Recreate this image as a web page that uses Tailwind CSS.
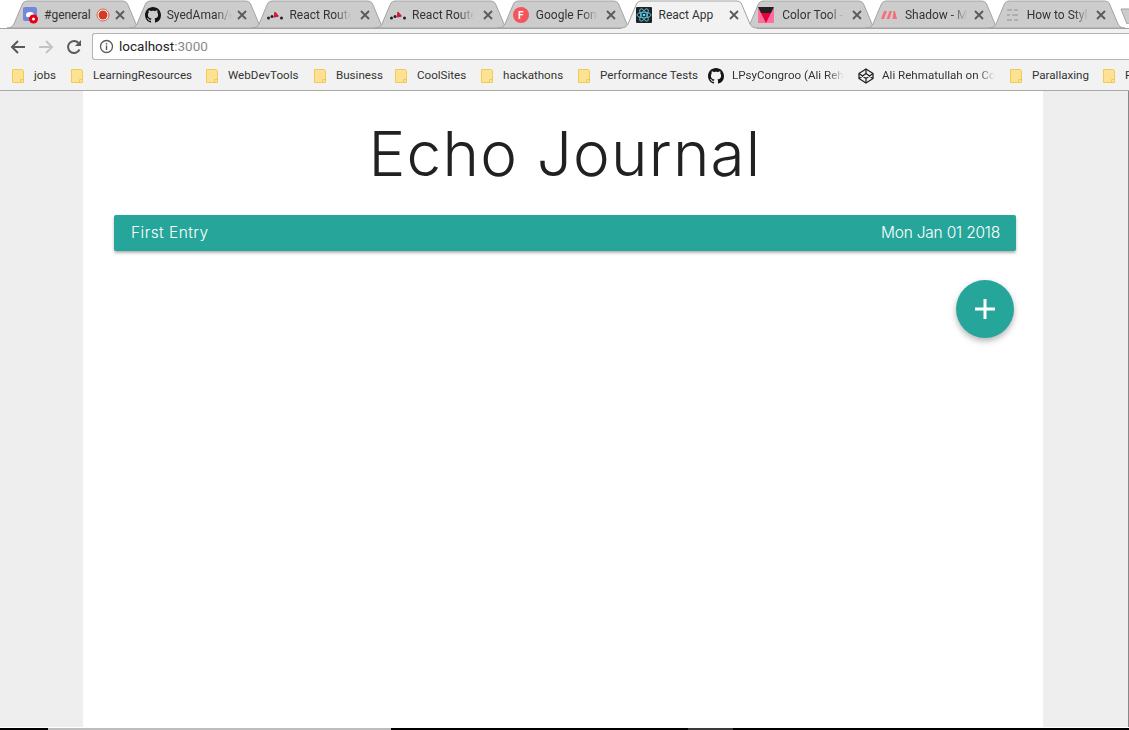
<!DOCTYPE html>
<html lang="en">
<head>
    <meta charset="UTF-8">
    <title>React App</title>
    <script src="https://cdn.jsdelivr.net/npm/@tailwindcss/browser@4"></script>
</head>
<body class="h-screen overflow-hidden flex flex-col bg-white font-['Roboto',sans-serif]">
    <!-- Tab strip -->
    <div class="h-[29px] shrink-0 flex pl-[7px] border-b border-[#a3a3a3] relative">
        <!-- #general -->
        <div class="relative w-[136px] -mr-[13.3px] h-[28px] pt-[2px] shrink-0 flex items-center text-[12px] text-[#333]">
            <svg class="absolute inset-0" width="136" height="28" viewBox="0 0 136 28"><path d="M0 28C4 28 6 26 7 24L15 5C16 2 18 1 21 1H115C118 1 120 2 121 5L129 24C130 26 132 28 136 28Z" fill="#ccc" stroke="#a3a3a3"/></svg>
            <svg class="relative ml-[16px] mt-[1px]" width="18" height="18" viewBox="0 0 18 18"><rect x="0" y="0" width="14" height="14" rx="2" fill="#7289da"/><path d="M3 8c0-2 1.500-3 4-3s4 1 4 3-1 2-1.500 2h-5C4 10 3 10 3 8z" fill="#fff"/><circle cx="10.500" cy="12" r="4.500" fill="#e60012"/><circle cx="10.500" cy="12" r="1.500" fill="#fff"/></svg>
            <span class="relative ml-[3px] w-[48px] overflow-hidden whitespace-nowrap">#general</span>
            <svg class="relative ml-[4px]" width="14" height="14" viewBox="0 0 14 14"><circle cx="7" cy="7" r="6" fill="#fff" stroke="#d9604c"/><circle cx="7" cy="7" r="4.500" fill="#d33a26"/></svg>
            <svg class="relative ml-[5px]" width="10" height="10" viewBox="0 0 10 10"><path d="M1 1l8 8M9 1l-8 8" stroke="#5a5a5a" stroke-width="1.800"/></svg>
        </div>
        <!-- SyedAman -->
        <div class="relative w-[136px] -mr-[13.3px] h-[28px] pt-[2px] shrink-0 flex items-center text-[12px] text-[#333]">
            <svg class="absolute inset-0" width="136" height="28" viewBox="0 0 136 28"><path d="M0 28C4 28 6 26 7 24L15 5C16 2 18 1 21 1H115C118 1 120 2 121 5L129 24C130 26 132 28 136 28Z" fill="#ccc" stroke="#a3a3a3"/></svg>
            <svg class="relative ml-[15px]" width="16" height="16" viewBox="0 0 16 16"><path fill="#161514" d="M8 0C3.580 0 0 3.580 0 8c0 3.540 2.290 6.530 5.470 7.590.4.070.55-.17.55-.38 0-.19-.01-.82-.01-1.490-2.010.37-2.530-.49-2.690-.94-.09-.23-.48-.94-.82-1.130-.28-.15-.68-.52-.01-.53.63-.01 1.080.58 1.230.82.72 1.210 1.870.87 2.330.66.07-.52.28-.87.51-1.070-1.780-.2-3.640-.89-3.640-3.950 0-.87.31-1.590.82-2.150-.08-.2-.36-1.020.08-2.120 0 0 .67-.21 2.200.82.64-.18 1.320-.27 2-.27.68 0 1.360.09 2 .27 1.530-1.040 2.200-.82 2.200-.82.44 1.100.16 1.920.08 2.120.51.56.82 1.270.82 2.150 0 3.070-1.870 3.750-3.650 3.950.29.25.54.73.54 1.480 0 1.070-.01 1.930-.01 2.200 0 .21.15.46.55.38A8.013 8.013 0 0016 8c0-4.420-3.580-8-8-8z"/></svg>
            <span class="relative ml-[6px] w-[65px] overflow-hidden whitespace-nowrap [mask-image:linear-gradient(90deg,#000_75%,transparent)]">SyedAman/echo</span>
            <svg class="relative ml-[5px]" width="10" height="10" viewBox="0 0 10 10"><path d="M1 1l8 8M9 1l-8 8" stroke="#5a5a5a" stroke-width="1.800"/></svg>
        </div>
        <!-- React Router -->
        <div class="relative w-[136px] -mr-[13.3px] h-[28px] pt-[2px] shrink-0 flex items-center text-[12px] text-[#333]">
            <svg class="absolute inset-0" width="136" height="28" viewBox="0 0 136 28"><path d="M0 28C4 28 6 26 7 24L15 5C16 2 18 1 21 1H115C118 1 120 2 121 5L129 24C130 26 132 28 136 28Z" fill="#ccc" stroke="#a3a3a3"/></svg>
            <svg class="relative ml-[15px]" width="16" height="16" viewBox="0 0 16 16"><circle cx="1.500" cy="11" r="1.500" fill="#222"/><circle cx="5" cy="9.500" r="1.500" fill="#222"/><path d="M8 5.500l3 3.500-3.500.8z" fill="#ca1f3d" stroke="#ca1f3d" stroke-width="1.500" stroke-linejoin="round"/><circle cx="14.500" cy="11" r="1.500" fill="#222"/></svg>
            <span class="relative ml-[6px] w-[62px] overflow-hidden whitespace-nowrap [mask-image:linear-gradient(90deg,#000_75%,transparent)]">React Router</span>
            <svg class="relative ml-[9px]" width="10" height="10" viewBox="0 0 10 10"><path d="M1 1l8 8M9 1l-8 8" stroke="#5a5a5a" stroke-width="1.800"/></svg>
        </div>
        <!-- React Router -->
        <div class="relative w-[136px] -mr-[13.3px] h-[28px] pt-[2px] shrink-0 flex items-center text-[12px] text-[#333]">
            <svg class="absolute inset-0" width="136" height="28" viewBox="0 0 136 28"><path d="M0 28C4 28 6 26 7 24L15 5C16 2 18 1 21 1H115C118 1 120 2 121 5L129 24C130 26 132 28 136 28Z" fill="#ccc" stroke="#a3a3a3"/></svg>
            <svg class="relative ml-[15px]" width="16" height="16" viewBox="0 0 16 16"><circle cx="1.500" cy="11" r="1.500" fill="#222"/><circle cx="5" cy="9.500" r="1.500" fill="#222"/><path d="M8 5.500l3 3.500-3.500.8z" fill="#ca1f3d" stroke="#ca1f3d" stroke-width="1.500" stroke-linejoin="round"/><circle cx="14.500" cy="11" r="1.500" fill="#222"/></svg>
            <span class="relative ml-[6px] w-[62px] overflow-hidden whitespace-nowrap [mask-image:linear-gradient(90deg,#000_75%,transparent)]">React Router</span>
            <svg class="relative ml-[9px]" width="10" height="10" viewBox="0 0 10 10"><path d="M1 1l8 8M9 1l-8 8" stroke="#5a5a5a" stroke-width="1.800"/></svg>
        </div>
        <!-- Google Fonts -->
        <div class="relative w-[136px] -mr-[13.3px] h-[28px] pt-[2px] shrink-0 flex items-center text-[12px] text-[#333]">
            <svg class="absolute inset-0" width="136" height="28" viewBox="0 0 136 28"><path d="M0 28C4 28 6 26 7 24L15 5C16 2 18 1 21 1H115C118 1 120 2 121 5L129 24C130 26 132 28 136 28Z" fill="#ccc" stroke="#a3a3a3"/></svg>
            <div class="relative ml-[15px] w-4 h-4 rounded-full bg-[#f4545a] flex items-center justify-center text-white text-[10px] font-bold">F</div>
            <span class="relative ml-[7px] w-[62px] overflow-hidden whitespace-nowrap [mask-image:linear-gradient(90deg,#000_75%,transparent)]">Google Fonts</span>
            <svg class="relative ml-[8px]" width="10" height="10" viewBox="0 0 10 10"><path d="M1 1l8 8M9 1l-8 8" stroke="#5a5a5a" stroke-width="1.800"/></svg>
        </div>
        <!-- React App (active) -->
        <div class="relative z-10 w-[136px] -mr-[13.3px] h-[29px] pt-[2px] pb-[1px] shrink-0 flex items-center text-[12px] text-[#333]">
            <svg class="absolute inset-0" width="136" height="29" viewBox="0 0 136 29"><path d="M0 28C4 28 6 26 7 24L15 5C16 2 18 1 21 1H115C118 1 120 2 121 5L129 24C130 26 132 28 136 28V29H0Z" fill="#f2f2f2"/><path d="M0 28C4 28 6 26 7 24L15 5C16 2 18 1 21 1H115C118 1 120 2 121 5L129 24C130 26 132 28 136 28" fill="none" stroke="#a3a3a3"/></svg>
            <svg class="relative ml-[15px]" width="16" height="16" viewBox="0 0 16 16"><rect width="16" height="16" rx="1" fill="#222"/><g fill="none" stroke="#61dafb" stroke-width=".8"><ellipse cx="8" cy="8" rx="7" ry="2.800"/><ellipse cx="8" cy="8" rx="7" ry="2.800" transform="rotate(60 8 8)"/><ellipse cx="8" cy="8" rx="7" ry="2.800" transform="rotate(120 8 8)"/></g><circle cx="8" cy="8" r="1.300" fill="#61dafb"/></svg>
            <span class="relative ml-[7px] w-[62px] overflow-hidden whitespace-nowrap">React App</span>
            <svg class="relative ml-[8px]" width="10" height="10" viewBox="0 0 10 10"><path d="M1 1l8 8M9 1l-8 8" stroke="#5a5a5a" stroke-width="1.800"/></svg>
        </div>
        <!-- Color Tool -->
        <div class="relative w-[136px] -mr-[13.3px] h-[28px] pt-[2px] shrink-0 flex items-center text-[12px] text-[#333]">
            <svg class="absolute inset-0" width="136" height="28" viewBox="0 0 136 28"><path d="M0 28C4 28 6 26 7 24L15 5C16 2 18 1 21 1H115C118 1 120 2 121 5L129 24C130 26 132 28 136 28Z" fill="#ccc" stroke="#a3a3a3"/></svg>
            <svg class="relative ml-[15px]" width="16" height="16" viewBox="0 0 16 16"><rect y="1" width="16" height="15" fill="#ff6e9c"/><path d="M0 0h16l-3 6H3z" fill="#222"/><path d="M3 6h10l-5 10z" fill="#e6003a"/></svg>
            <span class="relative ml-[8px] w-[62px] overflow-hidden whitespace-nowrap [mask-image:linear-gradient(90deg,#000_75%,transparent)]">Color Tool - Material</span>
            <svg class="relative ml-[8px]" width="10" height="10" viewBox="0 0 10 10"><path d="M1 1l8 8M9 1l-8 8" stroke="#5a5a5a" stroke-width="1.800"/></svg>
        </div>
        <!-- Shadow -->
        <div class="relative w-[136px] -mr-[13.3px] h-[28px] pt-[2px] shrink-0 flex items-center text-[12px] text-[#333]">
            <svg class="absolute inset-0" width="136" height="28" viewBox="0 0 136 28"><path d="M0 28C4 28 6 26 7 24L15 5C16 2 18 1 21 1H115C118 1 120 2 121 5L129 24C130 26 132 28 136 28Z" fill="#ccc" stroke="#a3a3a3"/></svg>
            <svg class="relative ml-[15px]" width="16" height="16" viewBox="0 0 16 16"><path d="M0 12l3-8h3l-3 8zM5.500 12l3-8h2.500l-2.500 8zM11.500 12l1-8h1.500l2 8h-2.500z" fill="#f2717d"/></svg>
            <span class="relative ml-[8px] w-[62px] overflow-hidden whitespace-nowrap [mask-image:linear-gradient(90deg,#000_75%,transparent)]">Shadow - Material</span>
            <svg class="relative ml-[7px]" width="10" height="10" viewBox="0 0 10 10"><path d="M1 1l8 8M9 1l-8 8" stroke="#5a5a5a" stroke-width="1.800"/></svg>
        </div>
        <!-- How to Style -->
        <div class="relative w-[136px] -mr-[13.3px] h-[28px] pt-[2px] shrink-0 flex items-center text-[12px] text-[#333]">
            <svg class="absolute inset-0" width="136" height="28" viewBox="0 0 136 28"><path d="M0 28C4 28 6 26 7 24L15 5C16 2 18 1 21 1H115C118 1 120 2 121 5L129 24C130 26 132 28 136 28Z" fill="#ccc" stroke="#a3a3a3"/></svg>
            <svg class="relative ml-[15px]" width="16" height="16" viewBox="0 0 16 16"><path d="M3 3h5M10 3h4M3 8h3M8 8h6M3 13h5M10 13h4" stroke="#a5a5a5" stroke-width="1.500"/></svg>
            <span class="relative ml-[7px] w-[62px] overflow-hidden whitespace-nowrap [mask-image:linear-gradient(90deg,#000_75%,transparent)]">How to Style</span>
            <svg class="relative ml-[7px]" width="10" height="10" viewBox="0 0 10 10"><path d="M1 1l8 8M9 1l-8 8" stroke="#5a5a5a" stroke-width="1.800"/></svg>
        </div>
        <!-- New tab button -->
        <svg class="absolute left-[1120px] top-[8px]" width="12" height="16" viewBox="0 0 12 16"><path d="M1 1H12V16H7z" fill="#ccc" stroke="#a3a3a3"/></svg>
    </div>

    <!-- Toolbar -->
    <div class="h-[33px] shrink-0 bg-[#f2f2f2] pt-[2px] flex items-center">
        <svg class="ml-[10px]" width="16" height="16" viewBox="0 0 16 16"><path d="M15 8H2M8 2L2 8l6 6" fill="none" stroke="#5a5a5a" stroke-width="2"/></svg>
        <svg class="ml-[12px]" width="16" height="16" viewBox="0 0 16 16"><path d="M1 8h13M8 2l6 6-6 6" fill="none" stroke="#c4c4c4" stroke-width="2"/></svg>
        <svg class="ml-[12px]" width="16" height="16" viewBox="0 0 16 16"><path d="M13.500 10.500A6 6 0 1 1 12.500 4" fill="none" stroke="#5a5a5a" stroke-width="2"/><path d="M15 1v6H9z" fill="#5a5a5a"/></svg>
        <div class="ml-[10px] h-[27px] flex-1 bg-white border border-r-0 border-[#b4b4b4] rounded-l-[3px] flex items-center pl-[6px] text-[13.5px]">
            <svg width="15" height="15" viewBox="0 0 15 15"><circle cx="7.500" cy="7.500" r="6" fill="none" stroke="#5a5a5a" stroke-width="1.300"/><path d="M7.500 6.500v4.500M7.500 4v1.500" stroke="#5a5a5a" stroke-width="1.400"/></svg>
            <span class="ml-[5px] text-[#222]">localhost<span class="text-[#8a8a8a]">:3000</span></span>
        </div>
    </div>

    <!-- Bookmarks bar -->
    <div class="h-[29px] shrink-0 bg-[#f2f2f2] border-b border-[#a9a9a9] flex items-center pl-[12px] text-[11.6px] text-[#333] whitespace-nowrap overflow-hidden">
        <div class="w-[59px] shrink-0 flex items-center">
            <svg width="12" height="14" viewBox="0 0 12 14"><path d="M.5.5h10l1 1v12H.5z" fill="#fde293" stroke="#f2ca57"/><path d="M8.500 13.500v-3h3" fill="none" stroke="#f2ca57"/></svg><span class="ml-[10px]">jobs</span>
        </div>
        <div class="w-[135px] shrink-0 flex items-center">
            <svg width="12" height="14" viewBox="0 0 12 14"><path d="M.5.5h10l1 1v12H.5z" fill="#fde293" stroke="#f2ca57"/><path d="M8.500 13.500v-3h3" fill="none" stroke="#f2ca57"/></svg><span class="ml-[10px]">LearningResources</span>
        </div>
        <div class="w-[108px] shrink-0 flex items-center">
            <svg width="12" height="14" viewBox="0 0 12 14"><path d="M.5.5h10l1 1v12H.5z" fill="#fde293" stroke="#f2ca57"/><path d="M8.500 13.500v-3h3" fill="none" stroke="#f2ca57"/></svg><span class="ml-[10px]">WebDevTools</span>
        </div>
        <div class="w-[81px] shrink-0 flex items-center">
            <svg width="12" height="14" viewBox="0 0 12 14"><path d="M.5.5h10l1 1v12H.5z" fill="#fde293" stroke="#f2ca57"/><path d="M8.500 13.500v-3h3" fill="none" stroke="#f2ca57"/></svg><span class="ml-[10px]">Business</span>
        </div>
        <div class="w-[86px] shrink-0 flex items-center">
            <svg width="12" height="14" viewBox="0 0 12 14"><path d="M.5.5h10l1 1v12H.5z" fill="#fde293" stroke="#f2ca57"/><path d="M8.500 13.500v-3h3" fill="none" stroke="#f2ca57"/></svg><span class="ml-[10px]">CoolSites</span>
        </div>
        <div class="w-[97px] shrink-0 flex items-center">
            <svg width="12" height="14" viewBox="0 0 12 14"><path d="M.5.5h10l1 1v12H.5z" fill="#fde293" stroke="#f2ca57"/><path d="M8.500 13.500v-3h3" fill="none" stroke="#f2ca57"/></svg><span class="ml-[10px]">hackathons</span>
        </div>
        <div class="w-[130px] shrink-0 flex items-center">
            <svg width="12" height="14" viewBox="0 0 12 14"><path d="M.5.5h10l1 1v12H.5z" fill="#fde293" stroke="#f2ca57"/><path d="M8.500 13.500v-3h3" fill="none" stroke="#f2ca57"/></svg><span class="ml-[10px]">Performance Tests</span>
        </div>
        <div class="w-[150px] shrink-0 flex items-center">
            <svg width="16" height="16" viewBox="0 0 16 16"><path fill="#161514" d="M8 0C3.580 0 0 3.580 0 8c0 3.540 2.290 6.530 5.470 7.590.4.070.55-.17.55-.38 0-.19-.01-.82-.01-1.490-2.010.37-2.530-.49-2.690-.94-.09-.23-.48-.94-.82-1.130-.28-.15-.68-.52-.01-.53.63-.01 1.080.58 1.230.82.72 1.210 1.870.87 2.330.66.07-.52.28-.87.51-1.070-1.780-.2-3.640-.89-3.640-3.950 0-.87.31-1.590.82-2.150-.08-.2-.36-1.020.08-2.120 0 0 .67-.21 2.200.82.64-.18 1.320-.27 2-.27.68 0 1.360.09 2 .27 1.530-1.040 2.200-.82 2.200-.82.44 1.100.16 1.920.08 2.120.51.56.82 1.270.82 2.150 0 3.070-1.870 3.750-3.650 3.950.29.25.54.73.54 1.480 0 1.070-.01 1.930-.01 2.200 0 .21.15.46.55.38A8.013 8.013 0 0016 8c0-4.420-3.580-8-8-8z"/></svg>
            <span class="ml-[8px] w-[112px] overflow-hidden [mask-image:linear-gradient(90deg,#000_85%,transparent)]">LPsyCongroo (Ali Rehmatullah)</span>
        </div>
        <div class="w-[152px] shrink-0 flex items-center">
            <svg width="16" height="16" viewBox="0 0 16 16"><g fill="none" stroke="#222" stroke-width="1.300" stroke-linejoin="round"><path d="M8 1l7 4.500v5L8 15l-7-4.500v-5z"/><path d="M8 1v4.500M8 10.500V15M1 5.500l7 5 7-5M1 10.500l7-5 7 5"/></g></svg>
            <span class="ml-[8px] w-[113px] overflow-hidden [mask-image:linear-gradient(90deg,#000_85%,transparent)]">Ali Rehmatullah on CodePen</span>
        </div>
        <div class="w-[93px] shrink-0 flex items-center">
            <svg width="12" height="14" viewBox="0 0 12 14"><path d="M.5.5h10l1 1v12H.5z" fill="#fde293" stroke="#f2ca57"/><path d="M8.500 13.500v-3h3" fill="none" stroke="#f2ca57"/></svg><span class="ml-[10px]">Parallaxing</span>
        </div>
        <div class="shrink-0 flex items-center">
            <svg width="12" height="14" viewBox="0 0 12 14"><path d="M.5.5h10l1 1v12H.5z" fill="#fde293" stroke="#f2ca57"/><path d="M8.500 13.500v-3h3" fill="none" stroke="#f2ca57"/></svg><span class="ml-[10px]">Fonts</span>
        </div>
    </div>

    <!-- Page -->
    <div class="flex-1 min-h-0 bg-[#eeeeee] pl-[83px] pr-[85px] border-r border-[#888] flex">
        <div class="w-[960px] bg-white pl-[31px] pr-[27px]">
            <h1 class="mt-[23px] text-center text-[62px] leading-[80px] font-light text-[#212121] font-['Inter',sans-serif] tracking-[1.2px]">Echo Journal</h1>
            <div class="mt-[21px] h-[36px] bg-[#26a69a] rounded-[2px] shadow-[0_2px_3px_rgba(0,0,0,0.3)] flex items-center justify-between pl-[17px] pr-[16px] text-white text-[15.5px] font-['Inter',sans-serif] font-light">
                <span class="tracking-[0.45px]">First Entry</span>
                <span class="-tracking-[0.2px]">Mon Jan 01 2018</span>
            </div>
            <div class="flex justify-end mt-[29px] pr-[2px]">
                <button class="w-[58px] h-[58px] rounded-full bg-[#26a69a] shadow-[0_3px_6px_rgba(0,0,0,0.3)] flex items-center justify-center">
                    <svg width="20" height="20" viewBox="0 0 20 20"><path d="M10 0v20M0 10h20" stroke="#fff" stroke-width="3"/></svg>
                </button>
            </div>
        </div>
    </div>

    <!-- Bottom strip -->
    <div class="h-[1px] shrink-0 bg-white"></div>
    <div class="h-[2px] shrink-0 bg-black flex">
        <div class="ml-[48px] w-[343px] bg-[#bdbdbd]"></div>
        <div class="ml-[297px] w-[45px] bg-[#3a3a3a]"></div>
    </div>
</body>
</html>
